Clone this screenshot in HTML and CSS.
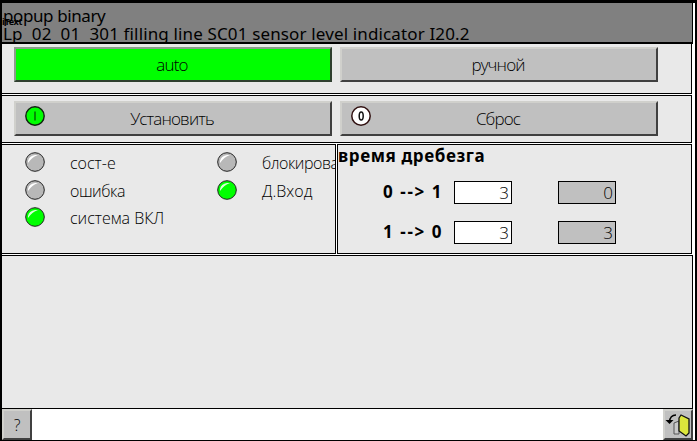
FILE: index.html
```html
<!DOCTYPE html>
<html lang="ru">
<head>
<meta charset="utf-8">
<title>popup binary</title>
<link rel="stylesheet" href="styles.css">
</head>
<body>
<main class="window">
  <header class="head">
    <div class="head-line title">popup binary</div>
    <div class="head-line tag">Lp&nbsp; 02&nbsp; 01&nbsp; 301 filling line SC01 sensor level indicator I20.2</div>
    <span class="stamp">iText</span>
  </header>
  <section class="panel modes">
    <button class="btn on">auto</button>
    <button class="btn">ручной</button>
  </section>
  <section class="panel actions">
    <button class="btn">
      <svg class="knob" viewBox="0 0 20 20"><circle cx="10" cy="10" r="9.2" fill="#00ff00" stroke="#102010" stroke-width="1.4"/><path d="M10 5.500v9" stroke="#064006" stroke-width="1.2"/></svg>
      Установить
    </button>
    <button class="btn">
      <svg class="knob" viewBox="0 0 20 20"><circle cx="10" cy="10" r="9.2" fill="#fff" stroke="#301010" stroke-width="1.5"/><ellipse cx="10.2" cy="10" rx="2" ry="4" fill="none" stroke="#111" stroke-width="1.5"/></svg>
      Сброс
    </button>
  </section>
  <section class="middle">
    <div class="panel status">
      <div class="col">
        <div class="lamp-row"><svg class="lamp" viewBox="0 0 20 20"><circle cx="10" cy="10" r="9.3" fill="#b8b8b8" stroke="#222"/><path d="M3 9Q4 4 10 3L13 3Q7 5 3 11Z" fill="#fff"/></svg><span>сост-е</span></div>
        <div class="lamp-row"><svg class="lamp" viewBox="0 0 20 20"><circle cx="10" cy="10" r="9.3" fill="#b8b8b8" stroke="#222"/><path d="M3 9Q4 4 10 3L13 3Q7 5 3 11Z" fill="#fff"/></svg><span class="tight">ошибка</span></div>
        <div class="lamp-row third"><svg class="lamp" viewBox="0 0 20 20"><circle cx="10" cy="10" r="9.3" fill="#00ff00" stroke="#222"/><path d="M3 9Q4 4 10 3L13 3Q7 5 3 11Z" fill="#d8ffd8"/></svg><span>система ВКЛ</span></div>
      </div>
      <div class="col">
        <div class="lamp-row"><svg class="lamp" viewBox="0 0 20 20"><circle cx="10" cy="10" r="9.3" fill="#b8b8b8" stroke="#222"/><path d="M3 9Q4 4 10 3L13 3Q7 5 3 11Z" fill="#fff"/></svg><span class="tight">блокирова</span></div>
        <div class="lamp-row"><svg class="lamp" viewBox="0 0 20 20"><circle cx="10" cy="10" r="9.3" fill="#00ff00" stroke="#222"/><path d="M3 9Q4 4 10 3L13 3Q7 5 3 11Z" fill="#d8ffd8"/></svg><span>Д.Вход</span></div>
      </div>
    </div>
    <div class="panel bounce">
      <h2>время дребезга</h2>
      <div class="time-row"><b>0 --&gt; 1</b><span class="field">3</span><span class="field readout">0</span></div>
      <div class="time-row"><b>1 --&gt; 0</b><span class="field">3</span><span class="field readout">3</span></div>
    </div>
  </section>
  <section class="panel blank"></section>
  <footer class="foot">
    <button class="small-btn">?</button>
    <button class="small-btn exit">
      <svg width="26" height="26" viewBox="0 0 26 26"><path d="M9 11l5-2v13H9z" fill="#c8c8c8" stroke="#555"/><path d="M14 6l2-3 8 4v14l-3 3-7-5z" fill="#dce63c" stroke="#111" stroke-width="1.3"/><path d="M11 3Q5 3 4.500 10" fill="none" stroke="#000" stroke-width="1.5"/><path d="M0.500 8h8l-4 4z"/></svg>
    </button>
  </footer>
</main>
</body>
</html>
```
FILE: styles.css
```css
* { box-sizing: border-box; }
body { margin: 0; font-family: "Noto Sans", sans-serif; color: #000; }
.window {
  width: 697px; height: 441px; overflow: hidden;
  display: flex; flex-direction: column;
  background: #fff;
  border: solid #000; border-width: 3px 2px 1px;
}
.head {
  position: relative; flex: none;
  width: 691px; height: 41px;
  background: #808080;
  border: solid #000; border-width: 0 1px 2px 0;
}
.head-line { height: 19px; line-height: 19px; padding-left: 1px; font-size: 17px; white-space: pre; }
.title { height: 21px; padding-top: 3px; letter-spacing: -0.4px; }
.tag { letter-spacing: 0.14px; }
.stamp { position: absolute; left: 0; top: 14px; font-size: 9px; line-height: 10px; font-weight: 700; letter-spacing: -0.3px; }
.panel {
  flex: none; width: 690px;
  background: #e9e9e9;
  border: solid #000; border-width: 1px 1px 1px 0;
}
.modes, .actions { display: flex; gap: 8px; padding-left: 12px; }
.modes { height: 50px; border-top: 0; padding-top: 3px; margin-bottom: 1px; }
.actions { height: 48px; padding-top: 5px; margin-bottom: 1px; }
.btn {
  position: relative; width: 318px; height: 35px; padding: 0 2px 0 0;
  background: #c0c0c0;
  border: 2px solid; border-color: #d0d0cc #404040 #404040 #d0d0cc;
  font: 300 17px/31px "Open Sans", sans-serif; color: #000;
  letter-spacing: -0.85px;
}
.btn.on { background: #00ff00; border-color: #8c9c8c #304030 #304030 #8c9c8c; }
.knob { position: absolute; left: 9px; top: 3px; width: 20px; height: 20px; }
.middle { display: flex; gap: 1px; flex: none; margin-bottom: 1px; }
.status { width: 334px; height: 110px; display: flex; padding: 7px 0 0 23px; overflow: hidden; }
.col { width: 192px; flex: none; display: flex; flex-direction: column; gap: 8px; }
.lamp-row { display: flex; height: 20px; gap: 25px; font: 300 16px/22px "Open Sans", sans-serif; white-space: nowrap; }
.third { margin-top: -1px; }
.tight { letter-spacing: -0.45px; }
.lamp { flex: none; width: 20px; height: 20px; }
.bounce { width: 355px; height: 110px; border-left-width: 1px; }
.bounce h2 { margin: 0; font-size: 17px; line-height: 22px; letter-spacing: 0.6px; }
.time-row { display: flex; height: 23px; margin: 14px 0 17px 45px; font-size: 17px; line-height: 22px; }
.time-row b { width: 71px; white-space: pre; letter-spacing: 1.6px; }
.field {
  width: 58px; height: 23px; margin-right: 46px; padding-right: 2px;
  border: 1px solid #000; background: #fff;
  text-align: right; font: 300 17px/21px "Open Sans", sans-serif;
}
.readout { background: #c0c0c0; }
.blank { width: 691px; height: 154px; }
.foot { display: flex; justify-content: space-between; width: 691px; height: 31px; }
.small-btn {
  width: 30px; height: 31px; padding: 0;
  background: #c0c0c0; border: 2px solid; border-color: #d0d0cc #404040 #404040 #d0d0cc;
  font: 300 16px/26px "Open Sans", sans-serif;
}
.exit svg { display: block; }
```
